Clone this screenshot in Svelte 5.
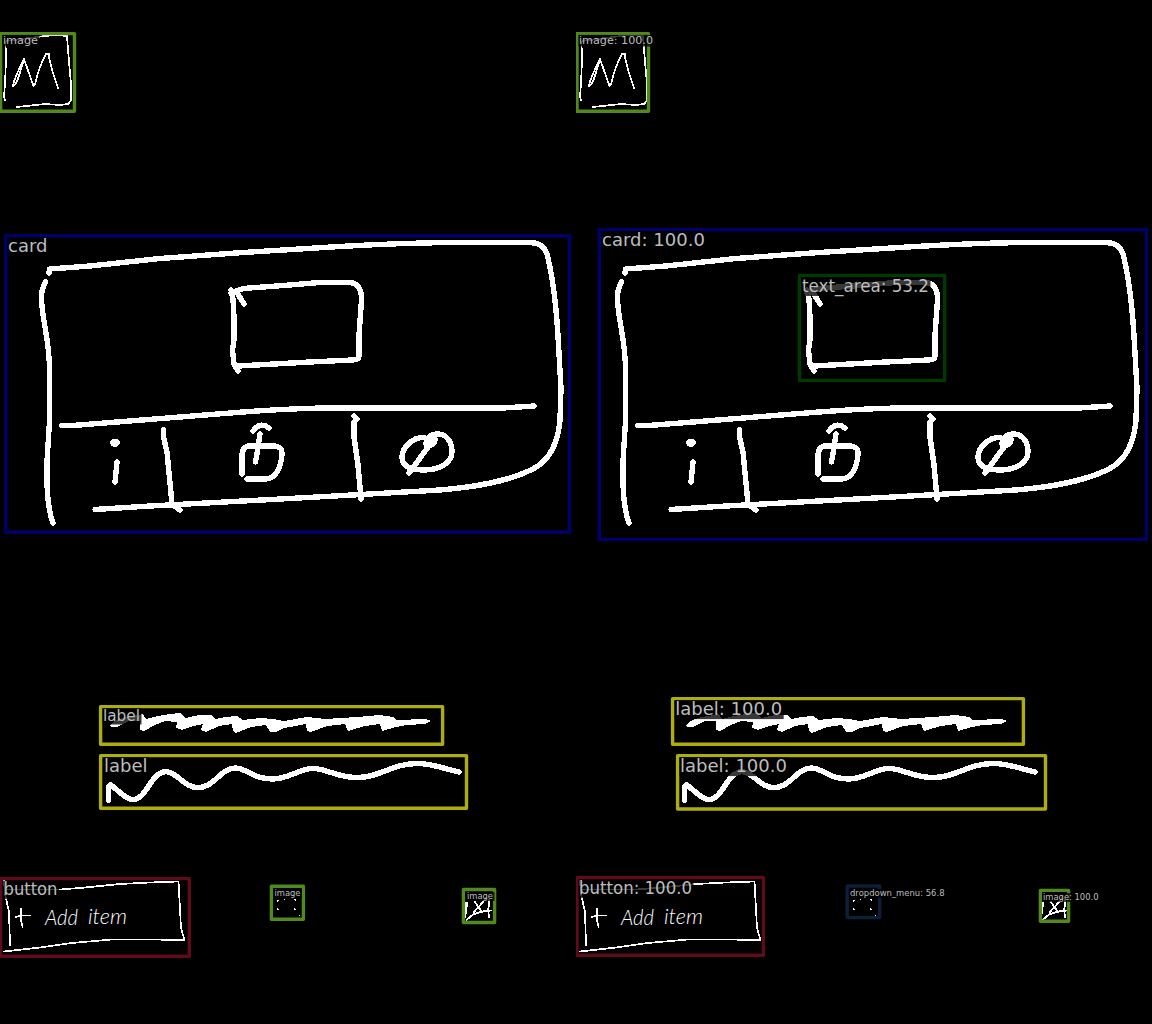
<script>
  const green = '#52891c';
  const navy = '#00006c';
  const olive = '#adad10';
  const maroon = '#5f0b1a';

  // x1, y1, x2, y2 are box line centres; tx, ty is the text baseline start; tw its width.
  const panels = [
    [
      { text: 'image', color: green, x1: 0.6, y1: 33.6, x2: 74.5, y2: 111.3, tx: 3, ty: 44, size: 11, tw: 35 },
      { text: 'card', color: navy, x1: 5.8, y1: 235.8, x2: 569.6, y2: 532.2, tx: 8, ty: 252, size: 17.8, tw: 39.5 },
      { text: 'label', color: olive, x1: 100.6, y1: 706.6, x2: 442.6, y2: 744.3, tx: 103, ty: 721, size: 15.2, tw: 37 },
      { text: 'label', color: olive, x1: 100.6, y1: 755.6, x2: 466.5, y2: 808.3, tx: 104, ty: 772, size: 17.8, tw: 43.5 },
      { text: 'button', color: maroon, x1: 0.6, y1: 878.6, x2: 189.3, y2: 956.3, tx: 3.5, ty: 895, size: 17, tw: 54 },
      { text: 'image', color: green, x1: 271.4, y1: 886.3, x2: 303.4, y2: 919.3, tx: 274.5, ty: 896, size: 8.3, tw: 26 },
      { text: 'image', color: green, x1: 463.4, y1: 889.5, x2: 494.6, y2: 922.5, tx: 467, ty: 899, size: 8.3, tw: 26 }
    ],
    [
      { text: 'image: 100.0', color: green, x1: 1, y1: 33.6, x2: 72.5, y2: 111.3, tx: 3, ty: 44, size: 11, tw: 74 },
      { text: 'card: 100.0', color: navy, x1: 23.3, y1: 229.6, x2: 570.6, y2: 539.4, tx: 26, ty: 246, size: 17.8, tw: 103 },
      { text: 'text_area: 53.2', color: '#003a00', x1: 223.5, y1: 275.4, x2: 368.6, y2: 380.4, tx: 226, ty: 292, size: 17.2, tw: 127 },
      { text: 'label: 100.0', color: olive, x1: 96.6, y1: 698.6, x2: 447.4, y2: 744.3, tx: 99.2, ty: 715, size: 17.8, tw: 107 },
      { text: 'label: 100.0', color: olive, x1: 101.6, y1: 755.6, x2: 469.5, y2: 809, tx: 104, ty: 772, size: 17.8, tw: 107 },
      { text: 'button: 100.0', color: maroon, x1: 1, y1: 877.5, x2: 187.4, y2: 955.3, tx: 3, ty: 894, size: 17, tw: 113 },
      { text: 'dropdown_menu: 56.8', color: '#0e1d38', x1: 271.2, y1: 886, x2: 303.7, y2: 917.6, tx: 274, ty: 896, size: 8.4, tw: 94.5 },
      { text: 'image: 100.0', color: green, x1: 464.4, y1: 890.4, x2: 492.6, y2: 921.3, tx: 467, ty: 900, size: 8.3, tw: 55.5 }
    ]
  ];
</script>

{#snippet sketch()}
  <g class="thin">
    <path d="M5.5 42L6 60L5 84L4 97L5 100M7 41L25 38.5L45 36L56 35L67 36L68 50L71 84L71 100L68.500 104L60 105L45 104L17 107" />
    <path d="M24 59C20 67 13 82 13 86C17 86 20 72 24 59L33.500 86L35 84Q39 67 46 54L49.500 53.500L49 57L52 70L58 88" />
    <path d="M4 881L5 894L9 912L10 945M5 889.500L60 889.500L80 888L120 884L150 882.500L178.500 881.500L179.500 900L181 928L184.500 940L150 939.500L112 939.500L72 943L40 947.500L4 951.500" />
    <path d="M16 917L22 915.500L30 915.500M21 909L21 920L22.500 927" />
  </g>

  <g class="bold">
    <path d="M49 273L49.500 269L90 266L160 258.500L243 252.500L340 246.500Q400 243 450 242.500L530 242.500Q545 242.500 548 258C554 284 557 315 558.500 345L561 388L560 420C558 444 550 460 533 469C507 482 475 487 440 490L361 494.500L290 498.500L150 506L95 509.500" />
    <path d="M45.500 282Q40.500 292 41.500 300C43 325 49.500 340 49.500 370L49.500 421L48 445C46 470 46 505 53 523" />
    <path d="M62 425.700L70 425.700L117 422L243 412Q310 407 355 408L503 408L534 406" />
    <path d="M163.500 430L163.500 437L167 452L170.500 488L172 504L180 510M354 416L357 419L354 422L354 437L358 465L361 499" />
    <path d="M117 462L115 482" />
    <path d="M253 431Q260 421 269 428M260 434L258 448L255.500 462M242 474L242 457Q242 446 250 446L273 446Q283 446 282 455C280 471 274 479 265 479L247 479" />
    <path d="M424 437.500C412 437 402 448 402 457C402 467 412 470 424 470C442 470 452 461 452 452C452 439 444 434 438 434C429 434 426 440 427 444M431 443L409 473" />
    <path d="M231 290L233 299L234 318L234 340L232.500 350L234 364L238 371M231 293L243 288.500L290 285L320 282.500L350 282.500Q362 284 361.500 300L359 335L359 356Q359 360 352 360L310 362L238 366M236 291L244 304" />
    <path d="M108.300 800L108.700 787L110.500 784.500L117 790C125 797 129 800 134 799.500C147 798 151 772 166 771.700C177 771.700 184 787.700 198 787.700C214 787.700 221 768 235 768C247 768 252 779 273 779C289 779 299 768.500 313 768.500C327 768.500 336 777.500 357 777.500C381 777.500 391 763.500 418 763.500C432 763.500 445 769 459 772" />
  </g>

  <g class="solid">
    <ellipse cx="115" cy="442.700" rx="4.800" ry="4.200" />
    <ellipse cx="430.500" cy="441.500" rx="8" ry="6" transform="rotate(-40 430.500 441.500)" />
    <path d="M110 725L115 721L122 718L131 716L139 715L143 714L146 719L158 716L170 714L180 713L186 718L199 715L211 715L216 719L225 717L237 716L243 720L260 718L273 719L284 721L307 717L325 719L340 718L357 717L380 715L393 717L396 720L425 719L431 721L425 724L407 725L396 727L382 731L380 724L365 726L348 731L345 724L327 726L311 732L307 731L306 724L290 727L284 728L276 732L270 732L266 725L251 727L236 733L233 731L232 724L219 726L206 732L201 730L203 724L193 726L182 730L176 728L177 722L165 721L155 725L144 731L140 730L140 721L129 721L117 727L111 727Z" />
  </g>

  <g class="solid">
    <path d="M277 900h2v1h-1v1h-1zM294 899h2v1h-2zM295 900h1v1h-1zM277 908h1v1h1v1h-2zM294 908h1v1h1v1h-2zM299 915h1v1h-1zM284 899h1v1h-1z" />
    <path d="M465 902h3v5h-1v7h-1v4h-1z" />
  </g>
  <path class="thin" d="M466.500 920L473 914.500L482 911.500L491 910.500M474 912L483 902L486 898M475 902L482 912M489 900L489 906L488 909L489 917" />

  <text class="hand" x="45" y="925" textLength="33" lengthAdjust="spacingAndGlyphs">Add</text>
  <text class="hand" x="88" y="924" textLength="39" lengthAdjust="spacingAndGlyphs">item</text>
{/snippet}

<main>
  {#each panels as boxes}
    <svg class="panel" viewBox="0 0 576 1024" width="576" height="1024">
      {@render sketch()}
      {#each boxes as b}
        <rect class="box" x={b.x1} y={b.y1} width={b.x2 - b.x1} height={b.y2 - b.y1} stroke={b.color} />
      {/each}
      {#each boxes as b}
        <rect class="shade" x={b.tx - 0.5} y={b.ty - b.size * 0.83} width={b.tw + 2} height={b.size * 1.06} />
        <text class="tag" x={b.tx} y={b.ty} font-size={b.size} textLength={b.tw} lengthAdjust="spacingAndGlyphs">{b.text}</text>
      {/each}
    </svg>
  {/each}
</main>

<style>
  :global(body) {
    background: #000;
  }
  main {
    display: grid;
    grid-template-columns: 576px 576px;
    width: 1152px;
    height: 1024px;
    background: #000;
    overflow: hidden;
  }
  .panel {
    display: block;
    overflow: hidden;
  }
  .thin,
  .bold {
    fill: none;
    stroke: #fff;
    stroke-linecap: round;
    stroke-linejoin: round;
    shape-rendering: crispEdges;
  }
  .thin {
    stroke-width: 1.7;
  }
  .bold {
    stroke-width: 5.4;
  }
  .solid {
    fill: #fff;
    shape-rendering: crispEdges;
  }
  .box {
    fill: none;
    stroke-width: 3.4;
    stroke-linejoin: round;
  }
  .shade {
    fill: rgba(0, 0, 0, 0.78);
  }
  .tag {
    font-family: 'DejaVu Sans', sans-serif;
    fill: #bdbdbd;
  }
  .hand {
    font-family: Lato, 'Open Sans', sans-serif;
    font-style: italic;
    font-weight: 300;
    font-size: 22px;
    fill: #fff;
  }
</style>
